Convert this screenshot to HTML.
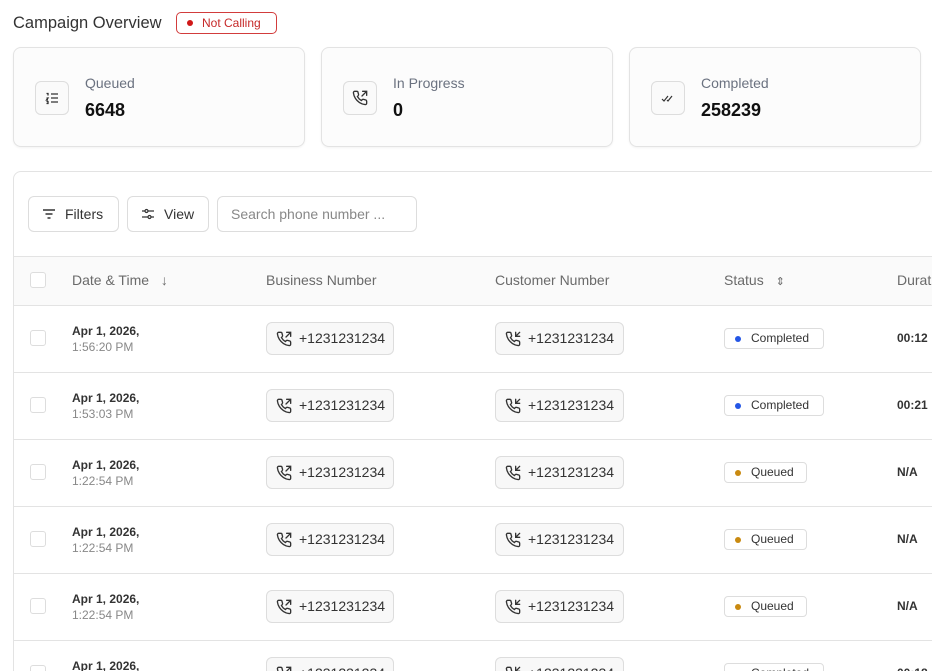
<!DOCTYPE html>
<html><head><meta charset="utf-8"><style>
*{box-sizing:border-box;margin:0;padding:0}
html,body{width:932px;height:671px;overflow:hidden}
body{background:#fff;font-family:"Liberation Sans",sans-serif;color:#1f2328;position:relative}
.abs{position:absolute}
.title{left:13px;top:14px;font-size:16.5px;color:#333}
.nc{left:176px;top:12px;width:101px;height:22px;border:1px solid #d23c3c;border-radius:5px;color:#c62828;font-size:12px;line-height:20px;padding-left:25px}
.nc:before{content:"";position:absolute;left:10px;top:7px;width:6px;height:6px;border-radius:50%;background:#d01818}
.card{top:47px;width:292px;height:100px;border:1px solid #e3e3e3;border-radius:8px;background:#fcfcfc;box-shadow:0 1px 2px rgba(0,0,0,.05)}
.ic{position:absolute;left:21px;top:33px;width:34px;height:34px;border:1px solid #ddd;border-radius:6px;background:#fafafa;display:flex;align-items:center;justify-content:center}
.cl{position:absolute;left:71px;top:27px;font-size:14px;color:#6b7280}
.cv{position:absolute;left:71px;top:52px;font-size:18px;font-weight:bold;color:#111}
.tbl{left:13px;top:171px;width:940px;height:520px;border:1px solid #e3e3e3;border-radius:8px}
.btn{top:196px;height:36px;border:1px solid #ddd;border-radius:6px;font-size:14px;color:#333;line-height:34px}
.hdr{left:14px;top:256px;width:930px;height:50px;background:#fafafa;border-top:1px solid #e3e3e3;border-bottom:1px solid #e3e3e3}
.hd{top:272px;font-size:14px;color:#6a6a6a}
.cb{width:16px;height:16px;border:1px solid #ddd;border-radius:3px;left:30px}
.line{left:14px;width:930px;height:1px;background:#e3e3e3}
.d1{font-size:12px;font-weight:bold;color:#333;left:72px}
.d2{font-size:12px;color:#888;left:72px}
.pill{height:33px;border:1px solid #ddd;border-radius:6px;background:#f8f8f8;font-size:14px;color:#333;line-height:31px;padding-left:32px}
.pill svg{position:absolute;left:9px;top:8px}
.st{left:724px;height:21px;border:1px solid #ddd;border-radius:4px;font-size:12px;color:#333;line-height:19px;padding-left:26px}
.st:before{content:"";position:absolute;left:10px;top:7px;width:6px;height:6px;border-radius:50%;background:var(--c)}
.du{left:897px;font-size:12px;font-weight:bold;color:#333}
</style></head><body>
<div class="abs title">Campaign Overview</div>
<div class="abs nc">Not Calling</div>

<div class="abs card" style="left:13px"><div class="ic"><svg width="14" height="14" viewBox="0 0 14 14" fill="none" stroke="#333" stroke-width="1.3"><path d="M6 3h7M6 7h7M6 11h7M1.5 2.5h1.5v2M1.5 7h1.5l-1.5 2h1.5M1.5 10.5h1.5v2h-1.5"/></svg></div><div class="cl">Queued</div><div class="cv">6648</div></div>
<div class="abs card" style="left:321px"><div class="ic"><svg width="16" height="16" viewBox="0 0 24 24" fill="none" stroke="#333" stroke-width="2" stroke-linecap="round"><path d="M16 2h6v6M22 2l-7 7"/><path d="M22 16.9v3a2 2 0 0 1-2.2 2 19.8 19.8 0 0 1-8.6-3.1 19.5 19.5 0 0 1-6-6A19.8 19.8 0 0 1 2.1 4.2 2 2 0 0 1 4.1 2h3a2 2 0 0 1 2 1.7c.1.9.4 1.8.7 2.7a2 2 0 0 1-.5 2.1L8.1 9.8a16 16 0 0 0 6 6l1.3-1.3a2 2 0 0 1 2.1-.4c.9.3 1.8.6 2.7.7a2 2 0 0 1 1.7 2z"/></svg></div><div class="cl">In Progress</div><div class="cv">0</div></div>
<div class="abs card" style="left:629px"><div class="ic"><svg width="14" height="14" viewBox="0 0 14 14" fill="none" stroke="#333" stroke-width="1.2"><path d="M1 8l2 2 4-5M6 9l1 1 4-5"/></svg></div><div class="cl">Completed</div><div class="cv">258239</div></div>

<div class="abs tbl"></div>
<div class="abs btn" style="left:28px;width:91px;padding-left:36px"><svg class="abs" style="left:13px;top:11px" width="14" height="12" viewBox="0 0 14 12" stroke="#333" stroke-width="1.4"><path d="M1 2h12M3.5 6h7M5.5 10h3"/></svg>Filters</div>
<div class="abs btn" style="left:127px;width:82px;padding-left:36px"><svg class="abs" style="left:13px;top:10px" width="14" height="14" viewBox="0 0 14 14" fill="none" stroke="#333" stroke-width="1.2"><path d="M1 4h3M7 4h6M1 10h6M10 10h3"/><circle cx="5.5" cy="4" r="1.5"/><circle cx="8.5" cy="10" r="1.5"/></svg>View</div>
<div class="abs btn" style="left:217px;width:200px;padding-left:13px;color:#888">Search phone number ...</div>

<div class="abs hdr"></div>
<div class="abs cb" style="top:272px;background:#fff"></div>
<div class="abs hd" style="left:72px">Date &amp; Time <span style="margin-left:8px">↓</span></div>
<div class="abs hd" style="left:266px">Business Number</div>
<div class="abs hd" style="left:495px">Customer Number</div>
<div class="abs hd" style="left:724px">Status <span style="margin-left:8px;font-size:11px">⇕</span></div>
<div class="abs hd" style="left:897px">Durat</div>

<div id="rows"></div>
<script>
var out='',data=[['1:56:20 PM','Completed','#2456e6','00:12'],['1:53:03 PM','Completed','#2456e6','00:21'],['1:22:54 PM','Queued','#c98a10','N/A'],['1:22:54 PM','Queued','#c98a10','N/A'],['1:22:54 PM','Queued','#c98a10','N/A'],['1:22:54 PM','Completed','#2456e6','00:18']];
var ph='M22 16.9v3a2 2 0 0 1-2.2 2 19.8 19.8 0 0 1-8.6-3.1 19.5 19.5 0 0 1-6-6A19.8 19.8 0 0 1 2.1 4.2 2 2 0 0 1 4.1 2h3a2 2 0 0 1 2 1.7c.1.9.4 1.8.7 2.7a2 2 0 0 1-.5 2.1L8.1 9.8a16 16 0 0 0 6 6l1.3-1.3a2 2 0 0 1 2.1-.4c.9.3 1.8.6 2.7.7a2 2 0 0 1 1.7 2z';
function icon(o){return '<svg width="16" height="16" viewBox="0 0 24 24" fill="none" stroke="#333" stroke-width="2" stroke-linecap="round">'+(o?'<path d="M16 2h6v6M22 2l-7 7"/>':'<path d="M16 2v6h6M22 2l-6 6"/>')+'<path d="'+ph+'"/></svg>';}
data.forEach(function(d,i){var t=305+i*67;
if(i>0)out+='<div class="abs line" style="top:'+t+'px"></div>';
out+='<div class="abs cb" style="top:'+(t+25)+'px"></div>';
out+='<div class="abs d1" style="top:'+(t+19)+'px">Apr 1, 2026,</div><div class="abs d2" style="top:'+(t+35)+'px">'+d[0]+'</div>';
out+='<div class="abs pill" style="left:266px;width:128px;top:'+(t+17)+'px">'+icon(1)+'+1231231234</div>';
out+='<div class="abs pill" style="left:495px;width:129px;top:'+(t+17)+'px">'+icon(0)+'+1231231234</div>';
out+='<div class="abs st" style="--c:'+d[2]+';width:'+(d[1]=='Completed'?100:83)+'px;top:'+(t+23)+'px">'+d[1]+'</div>';
out+='<div class="abs du" style="top:'+(t+26)+'px">'+d[3]+'</div>';});
document.getElementById('rows').innerHTML=out;
</script>
</body></html>
